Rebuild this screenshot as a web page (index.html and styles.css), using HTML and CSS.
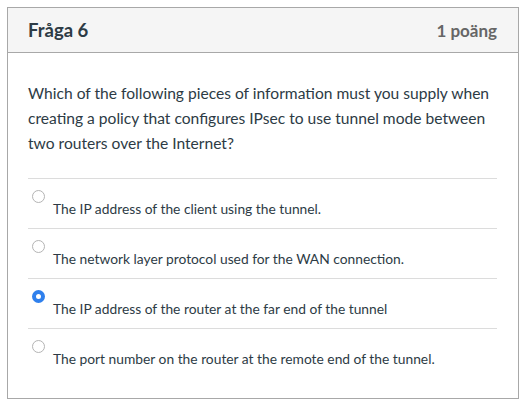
FILE: index.html
```html
<!DOCTYPE html>
<html lang="sv">
<head>
<meta charset="utf-8">
<link rel="stylesheet" href="styles.css">
</head>
<body>
<div class="card">
  <div class="header">
    <span class="title">Fråga 6</span>
    <span class="points">1 poäng</span>
  </div>
  <div class="content">
    <p class="question">Which of the following pieces of information must you supply when creating a policy that configures IPsec to use tunnel mode between two routers over the Internet?</p>
    <div class="answers">
      <div class="answer"><span class="radio"></span><span class="label">The IP address of the client using the tunnel.</span></div>
      <div class="answer"><span class="radio"></span><span class="label">The network layer protocol used for the WAN connection.</span></div>
      <div class="answer"><span class="radio checked"></span><span class="label">The IP address of the router at the far end of the tunnel</span></div>
      <div class="answer"><span class="radio"></span><span class="label">The port number on the router at the remote end of the tunnel.</span></div>
    </div>
  </div>
</div>
</body>
</html>
```

FILE: styles.css
```css
html, body {
  margin: 0;
  padding: 0;
  background: #fff;
}
body {
  padding: 7px;
  font-family: Lato, "Liberation Sans", sans-serif;
  color: #2d3b45;
}
.card {
  width: 510px;
  border: 1px solid #a8a8a8;
}
.header {
  height: 44px;
  background: #f5f5f5;
  border-bottom: 1px solid #a8a8a8;
  display: flex;
  align-items: center;
  justify-content: space-between;
  padding: 0 21px 0 20px;
}
.title {
  font-size: 18.5px;
  font-weight: 700;
  color: #2d3b45;
}
.points {
  font-size: 17px;
  font-weight: 700;
  color: #666;
}
.content {
  padding: 28px 21px 20px 20px;
}
.question {
  margin: 0 0 22px;
  font-size: 15.6px;
  line-height: 25px;
}
.answers {
  display: flex;
  flex-direction: column;
}
.answer {
  display: flex;
  align-items: flex-start;
  height: 49px;
  border-top: 1px solid #dcdcdc;
}
.radio {
  flex: none;
  box-sizing: border-box;
  width: 13px;
  height: 13px;
  margin: 11px 0 0 4px;
  border: 1px solid #b4b4b4;
  border-radius: 50%;
  background: #fff;
}
.radio.checked {
  border: 4.5px solid #2f80ed;
  background: #fff;
}
.label {
  margin-left: 8px;
  padding-top: 22px;
  font-size: 13.8px;
  line-height: 16px;
  color: #2d3b45;
}
```
